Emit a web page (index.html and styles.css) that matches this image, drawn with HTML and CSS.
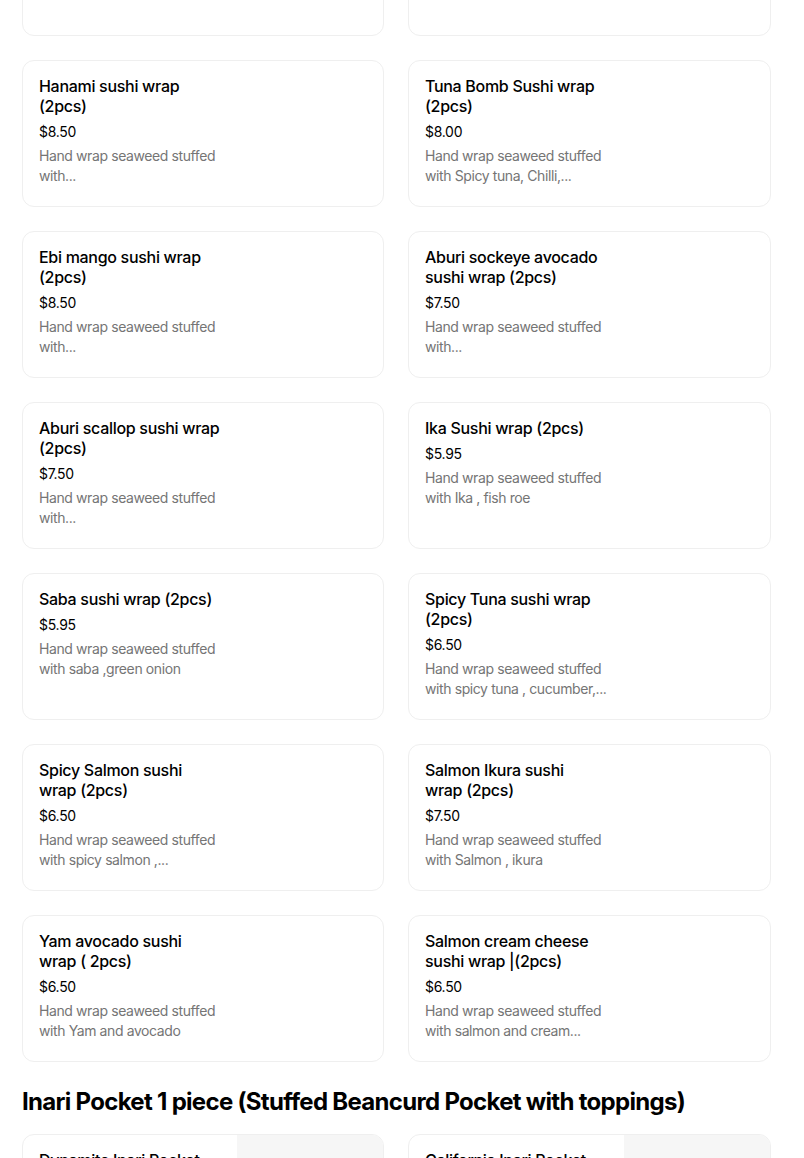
FILE: index.html
```html
<!DOCTYPE html>
<html lang="en">
<head>
<meta charset="utf-8">
<title>Menu</title>
<link rel="stylesheet" href="styles.css">
</head>
<body>
<main class="menu">
  <section class="grid grid-first">
    <article class="card"><div class="card-body"></div><div class="card-media"></div></article>
    <article class="card"><div class="card-body"></div><div class="card-media"></div></article>

    <article class="card"><div class="card-body">
      <h3 class="item-title">Hanami sushi wrap (2pcs)</h3>
      <p class="item-price">$8.50</p>
      <p class="item-desc">Hand wrap seaweed stuffed with...</p>
    </div><div class="card-media"></div></article>
    <article class="card"><div class="card-body">
      <h3 class="item-title">Tuna Bomb Sushi wrap (2pcs)</h3>
      <p class="item-price">$8.00</p>
      <p class="item-desc">Hand wrap seaweed stuffed with Spicy tuna, Chilli,...</p>
    </div><div class="card-media"></div></article>

    <article class="card"><div class="card-body">
      <h3 class="item-title">Ebi mango sushi wrap (2pcs)</h3>
      <p class="item-price">$8.50</p>
      <p class="item-desc">Hand wrap seaweed stuffed with...</p>
    </div><div class="card-media"></div></article>
    <article class="card"><div class="card-body">
      <h3 class="item-title">Aburi sockeye avocado sushi wrap (2pcs)</h3>
      <p class="item-price">$7.50</p>
      <p class="item-desc">Hand wrap seaweed stuffed with...</p>
    </div><div class="card-media"></div></article>

    <article class="card"><div class="card-body">
      <h3 class="item-title">Aburi scallop sushi wrap (2pcs)</h3>
      <p class="item-price">$7.50</p>
      <p class="item-desc">Hand wrap seaweed stuffed with...</p>
    </div><div class="card-media"></div></article>
    <article class="card"><div class="card-body">
      <h3 class="item-title">Ika Sushi wrap (2pcs)</h3>
      <p class="item-price">$5.95</p>
      <p class="item-desc">Hand wrap seaweed stuffed with Ika , fish roe</p>
    </div><div class="card-media"></div></article>

    <article class="card"><div class="card-body">
      <h3 class="item-title">Saba sushi wrap (2pcs)</h3>
      <p class="item-price">$5.95</p>
      <p class="item-desc">Hand wrap seaweed stuffed with saba ,green onion</p>
    </div><div class="card-media"></div></article>
    <article class="card"><div class="card-body">
      <h3 class="item-title">Spicy Tuna sushi wrap (2pcs)</h3>
      <p class="item-price">$6.50</p>
      <p class="item-desc">Hand wrap seaweed stuffed with spicy tuna , cucumber,...</p>
    </div><div class="card-media"></div></article>

    <article class="card"><div class="card-body">
      <h3 class="item-title">Spicy Salmon sushi wrap (2pcs)</h3>
      <p class="item-price">$6.50</p>
      <p class="item-desc">Hand wrap seaweed stuffed with spicy salmon ,...</p>
    </div><div class="card-media"></div></article>
    <article class="card"><div class="card-body">
      <h3 class="item-title">Salmon Ikura sushi wrap&nbsp;(2pcs)</h3>
      <p class="item-price">$7.50</p>
      <p class="item-desc">Hand wrap seaweed stuffed with Salmon , ikura</p>
    </div><div class="card-media"></div></article>

    <article class="card"><div class="card-body">
      <h3 class="item-title">Yam avocado sushi wrap ( 2pcs)</h3>
      <p class="item-price">$6.50</p>
      <p class="item-desc">Hand wrap seaweed stuffed with Yam and avocado</p>
    </div><div class="card-media"></div></article>
    <article class="card"><div class="card-body">
      <h3 class="item-title">Salmon cream cheese sushi wrap |(2pcs)</h3>
      <p class="item-price">$6.50</p>
      <p class="item-desc">Hand wrap seaweed stuffed with salmon and cream...</p>
    </div><div class="card-media"></div></article>
  </section>

  <h2 class="section-title">Inari Pocket 1 piece (Stuffed Beancurd Pocket with toppings)</h2>

  <section class="grid">
    <article class="card"><div class="card-body">
      <h3 class="item-title">Dynamite Inari Pocket</h3>
      <p class="item-price">$4.50</p>
      <p class="item-desc">Stuffed beancurd pocket with...</p>
    </div><div class="card-media has-photo"></div></article>
    <article class="card"><div class="card-body">
      <h3 class="item-title">California Inari Pocket</h3>
      <p class="item-price">$4.50</p>
      <p class="item-desc">Stuffed beancurd pocket with...</p>
    </div><div class="card-media has-photo"></div></article>
  </section>
</main>
</body>
</html>
```
FILE: styles.css
```css
* { box-sizing: border-box; }
html, body { margin: 0; padding: 0; background: #ffffff; }
body {
  font-family: Inter, "Noto Sans", "Liberation Sans", sans-serif;
  color: #000000;
  overflow: hidden;
}
.menu {
  padding: 0 33px 0 22px;
}
.grid {
  display: grid;
  grid-template-columns: 362px 363px;
  column-gap: 24px;
  row-gap: 24px;
}
.grid-first { margin-top: -111px; }
.card {
  display: flex;
  height: 147px;
  border: 1px solid #efefef;
  border-radius: 12px;
  overflow: hidden;
  background: #ffffff;
}
.card-body {
  flex: 1 1 auto;
  padding: 15px 16px 0 16px;
  min-width: 0;
}
.card-media {
  flex: 0 0 146px;
}
.card-media.has-photo { background: #f6f6f6; }
.item-title {
  margin: 0;
  font-size: 16px;
  line-height: 20px;
  font-weight: 500;
  letter-spacing: -0.3px;
  color: #000000;
}
.item-price {
  margin: 6px 0 0;
  font-size: 14px;
  line-height: 20px;
  font-weight: 400;
  letter-spacing: -0.3px;
  color: #000000;
}
.item-desc {
  margin: 4px 0 0;
  font-size: 14px;
  line-height: 20px;
  color: #757575;
  letter-spacing: -0.4px;
  display: -webkit-box;
  -webkit-line-clamp: 2;
  -webkit-box-orient: vertical;
  overflow: hidden;
}
.section-title {
  margin: 24px 0 16px;
  font-size: 24px;
  line-height: 32px;
  font-weight: 700;
  letter-spacing: -0.7px;
  color: #000000;
}
```
